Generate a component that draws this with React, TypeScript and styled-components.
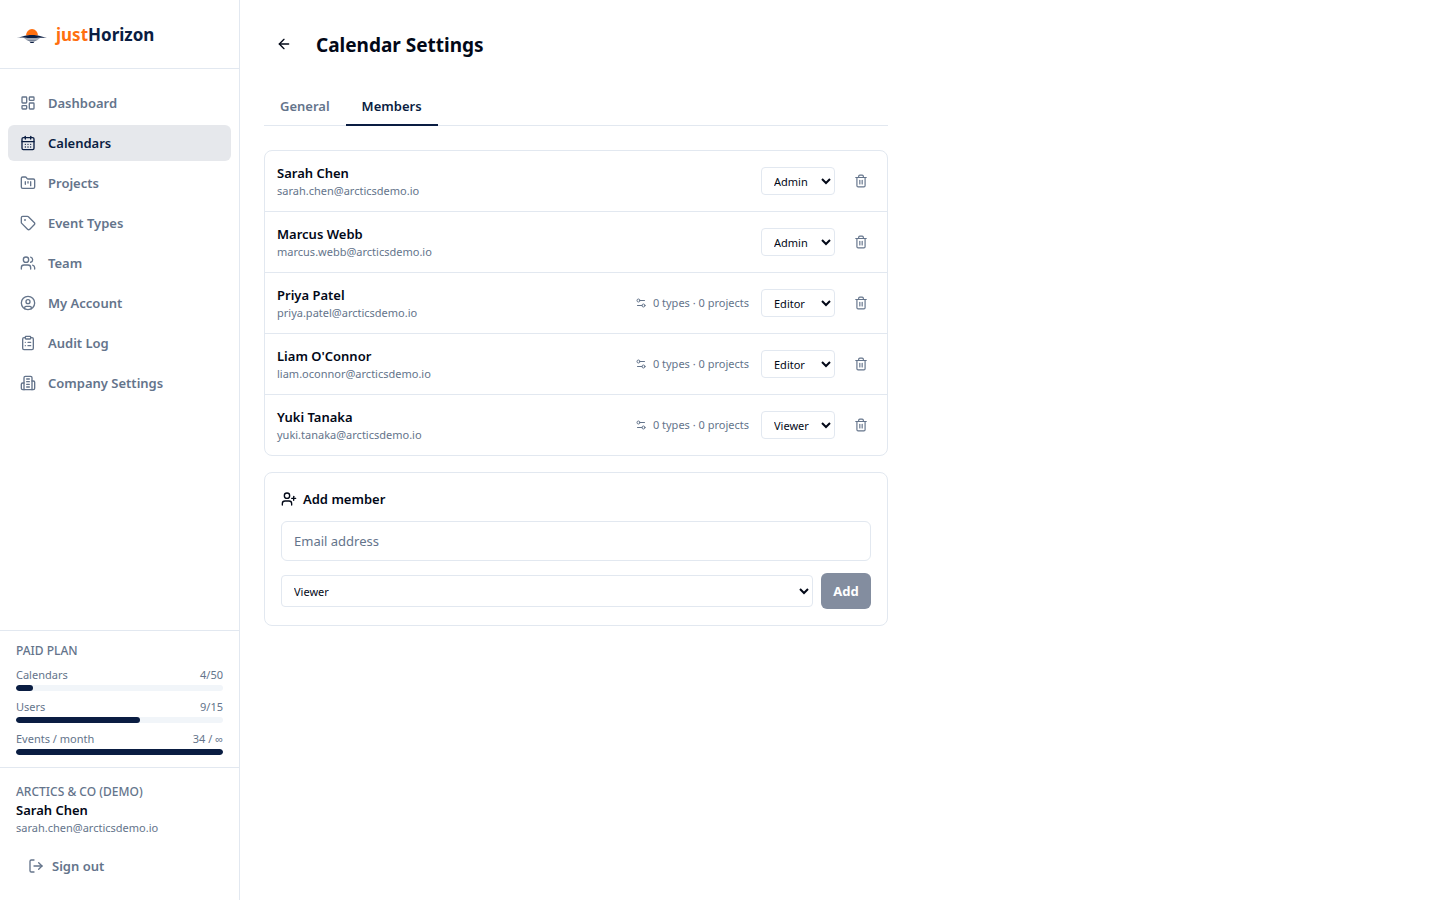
import React, { useState } from "react";
import styled, { createGlobalStyle } from "styled-components";
import {
  ArrowLeft,
  CalendarDays,
  CircleUser,
  ClipboardList,
  FolderKanban,
  LayoutDashboard,
  LogOut,
  Settings2,
  Tag,
  Trash2,
  UserPlus,
  Users,
} from "lucide-react";

const color = {
  ink: "#020817",
  navy: "#0a1d42",
  orange: "#ff6f0f",
  muted: "#64748b",
  line: "#e2e8f0",
  track: "#f1f5f9",
  active: "#e6e8ec",
};

const GlobalStyle = createGlobalStyle`
  *, *::before, *::after { box-sizing: border-box; }
  body {
    margin: 0;
    background: #fff;
    color: ${color.ink};
    font-family: "Segoe UI", "Noto Sans", sans-serif;
    font-size: 13px;
    line-height: 20px;
  }
  button, input, select { font: inherit; color: inherit; margin: 0; }
  h1, h2, p, ul { margin: 0; padding: 0; }
  ul { list-style: none; }
`;

const Shell = styled.div`
  display: flex;
  min-height: 100vh;
`;

const Sidebar = styled.aside`
  display: flex;
  flex-direction: column;
  flex: 0 0 240px;
  border-right: 1px solid ${color.line};
`;

const Brand = styled.a`
  display: flex;
  align-items: center;
  gap: 8px;
  padding: 21px 16px 19px;
  border-bottom: 1px solid ${color.line};
  color: ${color.navy};
  font-size: 17px;
  font-weight: 700;
  line-height: 28px;
  text-decoration: none;
`;

const BrandAccent = styled.span`
  color: ${color.orange};
`;

const Nav = styled.nav`
  flex: 1;
  padding: 16px 8px;
`;

const NavList = styled.ul`
  display: grid;
  gap: 4px;
`;

const NavLink = styled.a<{ $active?: boolean }>`
  display: flex;
  align-items: center;
  gap: 12px;
  padding: 8px 12px;
  border-radius: 6px;
  background: ${(p) => (p.$active ? color.active : "transparent")};
  color: ${(p) => (p.$active ? color.navy : color.muted)};
  font-weight: 600;
  text-decoration: none;
`;

const Plan = styled.section`
  display: grid;
  gap: 8px;
  padding: 12px 16px;
  border-top: 1px solid ${color.line};
  color: ${color.muted};
  font-size: 11px;
  line-height: 16px;
`;

const Caption = styled.h2`
  color: ${color.muted};
  font-size: 12px;
  font-weight: 500;
  line-height: 16px;
  text-transform: uppercase;
`;

const Usage = styled.div`
  display: grid;
  gap: 2px;
`;

const UsageLabel = styled.div`
  display: flex;
  justify-content: space-between;
`;

const Track = styled.div`
  height: 6px;
  overflow: hidden;
  border-radius: 3px;
  background: ${color.track};
`;

const Fill = styled.div`
  height: 100%;
  border-radius: 3px;
  background: ${color.navy};
`;

const Account = styled.section`
  padding: 16px;
  border-top: 1px solid ${color.line};
`;

const Name = styled.p`
  font-weight: 600;
`;

const Email = styled.p`
  color: ${color.muted};
  font-size: 11px;
  line-height: 16px;
`;

const SignOut = styled.button`
  display: flex;
  align-items: center;
  gap: 8px;
  width: 100%;
  height: 36px;
  margin-top: 12px;
  padding: 0 12px;
  border: 0;
  background: none;
  color: ${color.muted};
  font-weight: 600;
`;

const Main = styled.main`
  flex: 1;
  min-width: 0;
  padding: 24px;
`;

const Content = styled.div`
  max-width: 624px;
`;

const PageHeader = styled.header`
  display: flex;
  align-items: center;
  gap: 12px;
  margin-bottom: 24px;
`;

const IconButton = styled.button<{ $size: number; $muted?: boolean }>`
  display: grid;
  place-items: center;
  flex: none;
  width: ${(p) => p.$size}px;
  height: ${(p) => p.$size}px;
  padding: 0;
  border: 0;
  background: none;
  color: ${(p) => (p.$muted ? color.muted : color.ink)};
`;

const Title = styled.h1`
  padding-top: 2px;
  font-size: 19px;
  font-weight: 700;
  line-height: 28px;
`;

const Tabs = styled.div`
  display: flex;
  margin-bottom: 24px;
  box-shadow: inset 0 -1px ${color.line};
`;

const Tab = styled.button<{ $active: boolean }>`
  padding: 8px 16px;
  border: 0;
  border-bottom: 2px solid ${(p) => (p.$active ? color.navy : "transparent")};
  background: none;
  color: ${(p) => (p.$active ? color.navy : color.muted)};
  font-weight: 600;
`;

const MemberList = styled.ul`
  margin-bottom: 16px;
  border: 1px solid ${color.line};
  border-radius: 8px;
`;

const MemberRow = styled.li`
  display: flex;
  align-items: center;
  gap: 12px;
  padding: 12px;

  & + & {
    border-top: 1px solid ${color.line};
  }
`;

const Identity = styled.div`
  flex: 1;
  min-width: 0;
`;

const ScopeButton = styled.button`
  display: flex;
  align-items: center;
  gap: 6px;
  padding: 0;
  border: 0;
  background: none;
  color: ${color.muted};
  font-size: 11px;
  line-height: 16px;
`;

const Select = styled.select`
  flex: 1;
  min-width: 0;
  height: 32px;
  padding: 0 0 0 8px;
  border: 1px solid ${color.line};
  border-radius: 4px;
  background: #fff;
  font-size: 11px;
`;

const RoleSelect = styled(Select)`
  flex: none;
  width: 74px;
  height: 28px;
`;

const AddCard = styled.form`
  display: grid;
  gap: 12px;
  padding: 16px;
  border: 1px solid ${color.line};
  border-radius: 8px;
`;

const CardTitle = styled.h2`
  display: flex;
  align-items: center;
  gap: 6px;
  font-size: 13px;
  font-weight: 600;
  line-height: 20px;
`;

const TextInput = styled.input`
  width: 100%;
  height: 40px;
  padding: 0 12px;
  border: 1px solid ${color.line};
  border-radius: 6px;
  background: #fff;

  &::placeholder {
    color: ${color.muted};
    opacity: 1;
  }
`;

const FormRow = styled.div`
  display: flex;
  align-items: center;
  gap: 8px;
`;

const AddButton = styled.button`
  min-width: 50px;
  height: 36px;
  padding: 0 12px;
  border: 0;
  border-radius: 6px;
  background: ${color.navy};
  color: #fff;
  font-weight: 700;

  &:disabled {
    opacity: 0.5;
  }
`;

function HorizonLogo() {
  return (
    <svg width="32" height="24" viewBox="0 0 32 24" aria-hidden="true">
      <path d="M10 12.500a6 6.500 0 0 1 12 0z" fill={color.orange} />
      <path
        d="M1 14.600C8 13.400 10 12 16 12S24 13.400 31 14.600C24 15 20 14.900 16 14.900S8 15 1 14.600z"
        fill={color.navy}
      />
      <path d="M8 15.200h16l-2.500 1.600h-11z" fill={color.navy} opacity=".5" />
      <path d="M10.500 17h11l-2 1h-7z" fill={color.navy} opacity=".55" />
      <path d="M13 18.300h6l-1 1h-4z" fill={color.navy} opacity=".5" />
      <path d="M14 19h4l-.5 1h-3z" fill={color.navy} />
    </svg>
  );
}

function OfficeIcon() {
  return (
    <svg
      width="16"
      height="16"
      viewBox="0 0 24 24"
      fill="none"
      stroke="currentColor"
      strokeWidth="2"
      strokeLinecap="round"
      strokeLinejoin="round"
      aria-hidden="true"
    >
      <path d="M6 22V4a2 2 0 0 1 2-2h8a2 2 0 0 1 2 2v18Z" />
      <path d="M6 12H4a2 2 0 0 0-2 2v6a2 2 0 0 0 2 2h2" />
      <path d="M18 9h2a2 2 0 0 1 2 2v9a2 2 0 0 1-2 2h-2" />
      <path d="M10 6h4M10 10h4M10 14h4M10 18h4" />
    </svg>
  );
}

const navItems = [
  { label: "Dashboard", icon: <LayoutDashboard size={16} /> },
  { label: "Calendars", icon: <CalendarDays size={16} />, active: true },
  { label: "Projects", icon: <FolderKanban size={16} /> },
  { label: "Event Types", icon: <Tag size={16} /> },
  { label: "Team", icon: <Users size={16} /> },
  { label: "My Account", icon: <CircleUser size={16} /> },
  { label: "Audit Log", icon: <ClipboardList size={16} /> },
  { label: "Company Settings", icon: <OfficeIcon /> },
];

const usage = [
  { label: "Calendars", value: "4/50", percent: 8 },
  { label: "Users", value: "9/15", percent: 60 },
  { label: "Events / month", value: "34 / ∞", percent: 100 },
];

const members = [
  { name: "Sarah Chen", email: "sarah.chen@arcticsdemo.io", role: "Admin" },
  { name: "Marcus Webb", email: "marcus.webb@arcticsdemo.io", role: "Admin" },
  { name: "Priya Patel", email: "priya.patel@arcticsdemo.io", role: "Editor" },
  { name: "Liam O'Connor", email: "liam.oconnor@arcticsdemo.io", role: "Editor" },
  { name: "Yuki Tanaka", email: "yuki.tanaka@arcticsdemo.io", role: "Viewer" },
];

const roles = ["Admin", "Editor", "Viewer"];

function RoleOptions() {
  return (
    <>
      {roles.map((role) => (
        <option key={role}>{role}</option>
      ))}
    </>
  );
}

export default function App() {
  const [tab, setTab] = useState("Members");
  const [email, setEmail] = useState("");

  return (
    <>
      <GlobalStyle />
      <Shell>
        <Sidebar>
          <Brand href="#">
            <HorizonLogo />
            <span>
              <BrandAccent>just</BrandAccent>Horizon
            </span>
          </Brand>
          <Nav>
            <NavList>
              {navItems.map((item) => (
                <li key={item.label}>
                  <NavLink href="#" $active={item.active}>
                    {item.icon}
                    {item.label}
                  </NavLink>
                </li>
              ))}
            </NavList>
          </Nav>
          <Plan>
            <Caption>Paid plan</Caption>
            {usage.map((item) => (
              <Usage key={item.label}>
                <UsageLabel>
                  <span>{item.label}</span>
                  <span>{item.value}</span>
                </UsageLabel>
                <Track>
                  <Fill style={{ width: `${item.percent}%` }} />
                </Track>
              </Usage>
            ))}
          </Plan>
          <Account>
            <Caption>Arctics &amp; Co (Demo)</Caption>
            <Name>Sarah Chen</Name>
            <Email>sarah.chen@arcticsdemo.io</Email>
            <SignOut type="button">
              <LogOut size={16} />
              Sign out
            </SignOut>
          </Account>
        </Sidebar>
        <Main>
          <Content>
            <PageHeader>
              <IconButton type="button" $size={40} aria-label="Back">
                <ArrowLeft size={16} />
              </IconButton>
              <Title>Calendar Settings</Title>
            </PageHeader>
            <Tabs role="tablist">
              {["General", "Members"].map((label) => (
                <Tab
                  key={label}
                  type="button"
                  role="tab"
                  aria-selected={tab === label}
                  $active={tab === label}
                  onClick={() => setTab(label)}
                >
                  {label}
                </Tab>
              ))}
            </Tabs>
            <MemberList>
              {members.map((member) => (
                <MemberRow key={member.email}>
                  <Identity>
                    <Name>{member.name}</Name>
                    <Email>{member.email}</Email>
                  </Identity>
                  {member.role !== "Admin" && (
                    <ScopeButton type="button">
                      <Settings2 size={12} />
                      0 types · 0 projects
                    </ScopeButton>
                  )}
                  <RoleSelect
                    defaultValue={member.role}
                    aria-label={`Role of ${member.name}`}
                  >
                    <RoleOptions />
                  </RoleSelect>
                  <IconButton type="button" $size={28} $muted aria-label={`Remove ${member.name}`}>
                    <Trash2 size={14} />
                  </IconButton>
                </MemberRow>
              ))}
            </MemberList>
            <AddCard onSubmit={(event) => event.preventDefault()}>
              <CardTitle>
                <UserPlus size={16} />
                Add member
              </CardTitle>
              <TextInput
                type="email"
                placeholder="Email address"
                aria-label="Email address"
                value={email}
                onChange={(event) => setEmail(event.target.value)}
              />
              <FormRow>
                <Select defaultValue="Viewer" aria-label="Role">
                  <RoleOptions />
                </Select>
                <AddButton type="submit" disabled={!email}>
                  Add
                </AddButton>
              </FormRow>
            </AddCard>
          </Content>
        </Main>
      </Shell>
    </>
  );
}
